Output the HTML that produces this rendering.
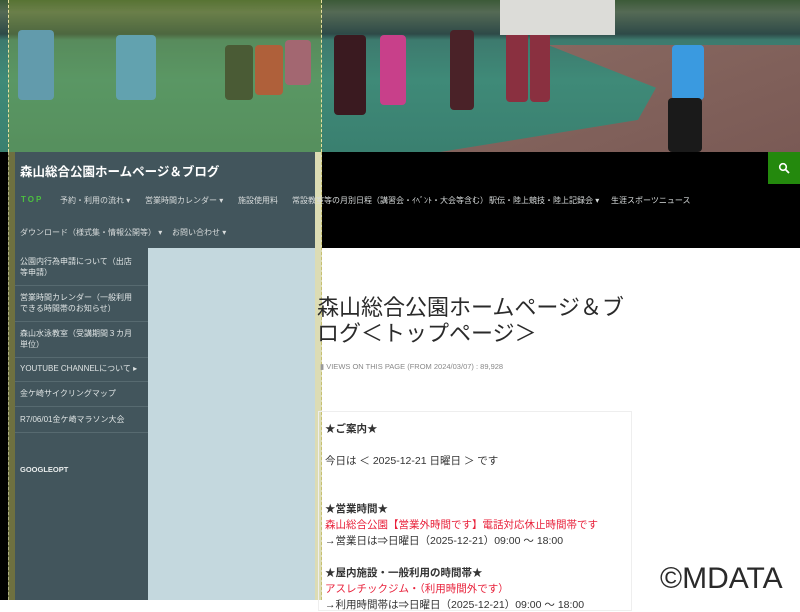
<!DOCTYPE html>
<html><head><meta charset="utf-8"><style>
*{margin:0;padding:0;box-sizing:border-box}
body{width:800px;height:600px;overflow:hidden;position:relative;background:#fff;font-family:"Liberation Sans","Noto Sans CJK JP",sans-serif}
.a{position:absolute;white-space:nowrap}
#hdr{position:absolute;left:0;top:0;width:800px;height:152px;
background:linear-gradient(180deg,#3c5a38 0,#556a55 12px,#2e4a48 34px,#3d7a6e 40px,#3f8a78 80px,#3a8070 150px)}
#clay{position:absolute;left:440px;top:45px;width:360px;height:107px;background:linear-gradient(160deg,#8a6a62,#7a5a55);clip-path:polygon(30% 0,100% 0,100% 100%,0 100%,55% 70%,60% 40%)}
.p{position:absolute;border-radius:4px}
#nav{position:absolute;left:0;top:152px;width:800px;height:96px;background:#000}
#ov{position:absolute;left:8px;top:0;width:314px;height:152px;background:rgba(170,190,40,.25);border-left:1px dashed #e8e0a0;border-right:1px dashed #e8e0a0}
#slate{position:absolute;left:15px;top:152px;width:300px;height:96px;background:#42555c}
#side{position:absolute;left:15px;top:248px;width:133px;height:352px;background:#42555c}
#lb{position:absolute;left:148px;top:248px;width:167px;height:352px;background:#c4d8de}
#ys{position:absolute;left:315px;top:152px;width:7px;height:448px;background:#dcdcb4;border-right:1px dashed #c8c070}
#ol{position:absolute;left:8px;top:152px;width:7px;height:448px;background:#6e7040;border-left:1px dashed #b0b080}
.m{color:#d8dcdc;font-size:8px}
.s{position:absolute;left:15px;width:133px;border-bottom:1px solid #576a70;color:#dfe4e4;font-size:8px;padding-left:5px;line-height:11px}
.c{font-size:10.5px;color:#333}
.r{color:#e8203a}
</style></head><body>
<div id="hdr"><div id="clay"></div>
<div class="p" style="left:18px;top:30px;width:36px;height:70px;background:#4a8fd8"></div>
<div class="p" style="left:116px;top:35px;width:40px;height:65px;background:#4a98dc"></div>
<div class="p" style="left:225px;top:45px;width:28px;height:55px;background:#2a3a3a"></div>
<div class="p" style="left:255px;top:45px;width:28px;height:50px;background:#b04040"></div>
<div class="p" style="left:285px;top:40px;width:26px;height:45px;background:#a04a8a"></div>
<div class="p" style="left:334px;top:35px;width:32px;height:80px;background:#3a1a20"></div>
<div class="p" style="left:380px;top:35px;width:26px;height:70px;background:#c8408a"></div>
<div class="p" style="left:450px;top:30px;width:24px;height:80px;background:#4a2228"></div>
<div class="p" style="left:506px;top:32px;width:22px;height:70px;background:#8a3040"></div>
<div class="p" style="left:530px;top:32px;width:20px;height:70px;background:#8a3040"></div>
<div class="p" style="left:672px;top:45px;width:32px;height:55px;background:#3a9ae0"></div>
<div class="p" style="left:668px;top:98px;width:34px;height:54px;background:#1a1a1a"></div>
<div style="position:absolute;left:500px;top:0;width:115px;height:35px;background:#dcdcd8"></div>
</div>
<div id="nav"></div>
<div style="position:absolute;left:0;top:248px;width:8px;height:352px;background:#000"></div>
<div id="slate"></div><div id="side"></div><div id="lb"></div><div id="ys"></div><div id="ol"></div>
<div style="position:absolute;left:768px;top:152px;width:32px;height:32px;background:#24890d"></div>
<svg class="a" style="left:778px;top:162px" width="12" height="12" viewBox="0 0 12 12"><circle cx="5" cy="5" r="3.3" stroke="#fff" stroke-width="1.6" fill="none"/><path d="M7.5 7.5L11 11" stroke="#fff" stroke-width="1.8"/></svg>
<div class="a" style="left:20px;top:161px;color:#fff;font-size:12.5px;font-weight:bold">森山総合公園ホームページ＆ブログ</div>
<div class="a m" style="left:21px;top:195px;color:#4cc040;font-weight:bold;letter-spacing:2px">TOP</div>
<div class="a m" style="left:60px;top:195px">予約・利用の流れ ▾</div>
<div class="a m" style="left:145px;top:195px">営業時間カレンダー ▾</div>
<div class="a m" style="left:238px;top:195px">施設使用料</div>
<div class="a m" style="left:292px;top:195px">常設教室等の月別日程（講習会・ｲﾍﾞﾝﾄ・大会等含む）</div>
<div class="a m" style="left:489px;top:195px">駅伝・陸上競技・陸上記録会 ▾</div>
<div class="a m" style="left:611px;top:195px">生涯スポーツニュース</div>
<div class="a m" style="left:20px;top:227px">ダウンロード（様式集・情報公開等） ▾</div>
<div class="a m" style="left:172px;top:227px">お問い合わせ ▾</div>
<div class="s" style="top:250px;height:36px;padding-top:6px">公園内行為申請について（出店<br>等申請）</div>
<div class="s" style="top:286px;height:36px;padding-top:6px">営業時間カレンダー（一般利用<br>できる時間帯のお知らせ）</div>
<div class="s" style="top:322px;height:36px;padding-top:6px">森山水泳教室（受講期間３カ月<br>単位）</div>
<div class="s" style="top:358px;height:24px;padding-top:5px">YOUTUBE CHANNELについて ▸</div>
<div class="s" style="top:382px;height:25px;padding-top:6px">金ケ崎サイクリングマップ</div>
<div class="s" style="top:407px;height:26px;padding-top:7px">R7/06/01金ケ崎マラソン大会</div>
<div class="a" style="left:20px;top:465px;color:#e8ecec;font-size:7.5px;font-weight:bold">GOOGLEOPT</div>
<div class="a" style="left:317px;top:295px;font-size:22px;color:#2a2a2a;line-height:26px">森山総合公園ホームページ＆ブ<br>ログ＜トップページ＞</div>
<div class="a" style="left:320px;top:362px;font-size:7.5px;color:#888"><span style="color:#999">▮</span> VIEWS ON THIS PAGE (FROM 2024/03/07) : 89,928</div>
<div style="position:absolute;left:318px;top:411px;width:314px;height:200px;border:1px solid #eee"></div>
<div class="a c" style="left:325px;top:421px;font-weight:bold">★ご案内★</div>
<div class="a c" style="left:325px;top:453px">今日は ＜ 2025-12-21 日曜日 ＞ です</div>
<div class="a c" style="left:325px;top:501px;font-weight:bold">★営業時間★</div>
<div class="a c r" style="left:325px;top:517px">森山総合公園【営業外時間です】電話対応休止時間帯です</div>
<div class="a c" style="left:325px;top:533px">→営業日は⇒日曜日（2025-12-21）09:00 ～ 18:00</div>
<div class="a c" style="left:325px;top:565px;font-weight:bold">★屋内施設・一般利用の時間帯★</div>
<div class="a c r" style="left:325px;top:581px">アスレチックジム・（利用時間外です）</div>
<div class="a c" style="left:325px;top:597px">→利用時間帯は⇒日曜日（2025-12-21）09:00 ～ 18:00</div>
<div id="ov"></div>
<div class="a" style="left:660px;top:562px;font-size:30px;color:#2a2a2a">©MDATA</div>
</body></html>
